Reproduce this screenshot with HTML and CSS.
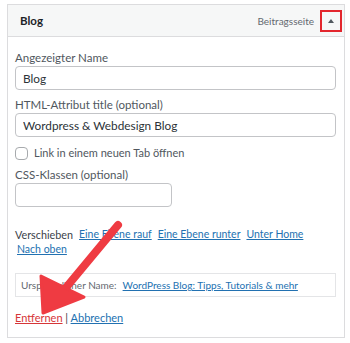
FILE: index.html
```html
<!DOCTYPE html>
<html>
<head>
  <link rel="stylesheet" href="styles.css">
</head>
<body>
<div class="menu-item">
  <div class="item-bar">
    <span class="item-title">Blog</span>
    <span class="item-type">Beitragsseite</span>
    <span class="item-toggle"><span class="triangle"></span></span>
  </div>

  <div class="item-settings">
    <label class="field-label">Angezeigter Name</label>
    <input class="field-input" type="text" value="Blog">

    <label class="field-label">HTML-Attribut title (optional)</label>
    <input class="field-input" type="text" value="Wordpress &amp; Webdesign Blog">

    <label class="check-row">
      <span class="check-box"></span>
      Link in einem neuen Tab öffnen
    </label>

    <label class="field-label">CSS-Klassen (optional)</label>
    <input class="field-input short" type="text" value="">

    <div class="move-row">
      <span class="move-label">Verschieben</span>
      <a href="#">Eine Ebene rauf</a>
      <a href="#">Eine Ebene runter</a>
      <a href="#">Unter Home</a>
      <a href="#" class="first-link">Nach oben</a>
    </div>

    <div class="original-box">
      <span>Ursprünglicher Name:</span>
      <a href="#">WordPress Blog: Tipps, Tutorials &amp; mehr</a>
    </div>

    <div class="actions">
      <a href="#" class="delete">Entfernen</a> | <a href="#">Abbrechen</a>
    </div>
  </div>

  <!-- Markierungspfeil -->
  <svg class="arrow" width="350" height="343" viewBox="0 0 350 343">
    <line x1="118" y1="225" x2="64" y2="290" stroke="#ef3b42" stroke-width="8" stroke-linecap="round"/>
    <polygon points="43,313 41,276 84,297" fill="#ef3b42" stroke="#ef3b42" stroke-width="3" stroke-linejoin="round"/>
  </svg>
</div>
</body>
</html>
```

FILE: styles.css
```css
body {
  margin: 0;
  background-color: #ffffff;
  font-family: Lato, Arial, sans-serif;
  color: #3c434a;
}

.menu-item {
  margin: 4px 5px 0 7px;
  border: 1px solid #dcdcde;
  height: 334px;
  box-sizing: border-box;
}

.item-bar {
  display: flex;
  align-items: center;
  height: 32px;
  box-sizing: border-box;
  background-color: #f6f7f7;
  border-bottom: 1px solid #dcdcde;
  padding: 0 2px 0 12px;
}

.item-title {
  font-size: 11.5px;
  font-weight: 700;
  color: #1d2327;
  flex: 1;
}

.item-type {
  font-size: 10px;
  color: #646970;
  margin-right: 6px;
}

.item-toggle {
  width: 22px;
  height: 22px;
  box-sizing: border-box;
  border: 2px solid #e3262d;
  display: flex;
  align-items: center;
  justify-content: center;
}

.triangle {
  width: 0;
  height: 0;
  border-left: 3px solid transparent;
  border-right: 3px solid transparent;
  border-bottom: 4px solid #50575e;
}

.item-settings {
  padding: 13px 8px 0 7px;
  display: flex;
  flex-direction: column;
}

.field-label {
  font-size: 11.5px;
  line-height: 16px;
  color: #50575e;
}

.field-input {
  height: 24px;
  box-sizing: border-box;
  border: 1px solid #c3c4c7;
  border-radius: 4px;
  padding: 0 7px;
  font-family: inherit;
  font-size: 11.8px;
  color: #2c3338;
  margin: 0 0 7px;
}

.field-input.short {
  width: 157px;
  margin-bottom: 0;
}

.check-row {
  display: flex;
  align-items: center;
  gap: 6px;
  font-size: 11px;
  line-height: 14px;
  color: #50575e;
  margin: 2px 0 7px;
}

.check-box {
  width: 13px;
  height: 13px;
  box-sizing: border-box;
  border: 1px solid #a7aaad;
  border-radius: 4px;
}

.move-row {
  display: flex;
  flex-wrap: wrap;
  column-gap: 6px;
  font-size: 10.5px;
  line-height: 15px;
  margin-top: 20px;
}

.move-label {
  font-size: 10.8px;
}

.move-row a,
.original-box a,
.actions a {
  color: #2271b1;
}

.first-link {
  margin-left: 2px;
}

.original-box {
  margin-top: 16px;
  height: 24px;
  box-sizing: border-box;
  border: 1px solid #e4e5e7;
  display: flex;
  align-items: center;
  gap: 6px;
  padding-left: 5px;
  font-size: 10px;
  color: #646970;
  white-space: nowrap;
}

.actions {
  margin-top: 13px;
  font-size: 11px;
  line-height: 15px;
}

.actions a.delete {
  color: #d63638;
}

.arrow {
  position: absolute;
  top: 0;
  left: 0;
  pointer-events: none;
}
```
